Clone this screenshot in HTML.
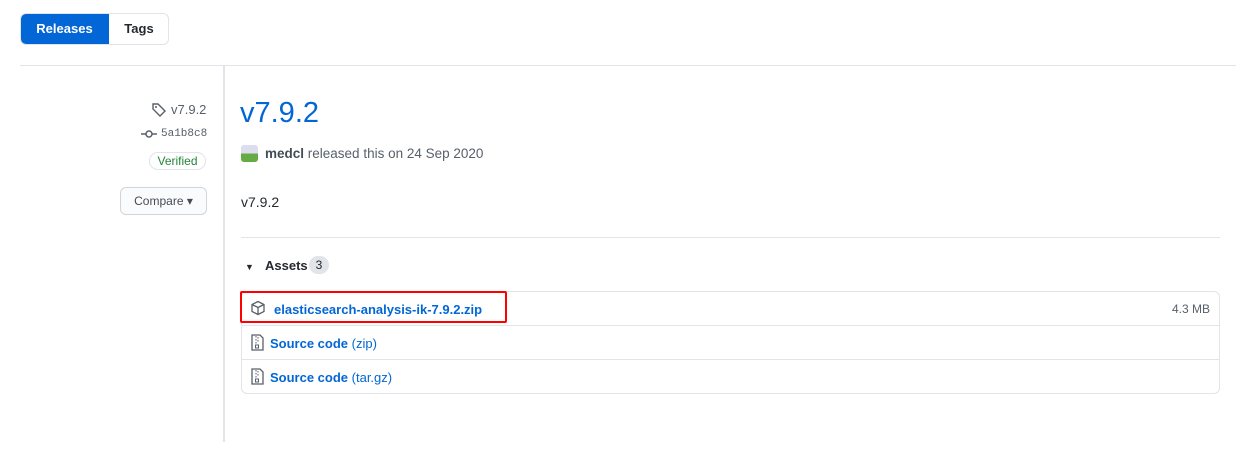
<!DOCTYPE html><html><head><style>
body{margin:0;width:1248px;height:455px;background:#fff;font-family:"Liberation Sans",sans-serif;font-size:13px;color:#24292e;position:relative;overflow:hidden}
.a{position:absolute}
.blue{color:#0366d6}
</style></head><body>
<div class="a" style="left:20px;top:13px;width:149px;height:32px;border:1px solid #e1e4e8;border-radius:6px;box-sizing:border-box;overflow:hidden">
<div class="a" style="left:-1px;top:-1px;width:89px;height:32px;background:#0366d6;color:#fff;font-weight:bold;line-height:32px;text-align:center">Releases</div>
<div class="a" style="left:88px;top:-1px;width:60px;line-height:32px;text-align:center;font-weight:bold">Tags</div>
</div>
<div class="a" style="left:20px;top:65px;width:1216px;height:1px;background:#e1e4e8"></div>
<div class="a" style="left:223px;top:66px;width:2px;height:376px;background:#e1e4e8"></div>
<svg class="a" style="left:151px;top:102px" width="16" height="16" viewBox="0 0 16 16"><path d="M2 2h5l7 7-5 5-7-7z" fill="none" stroke="#586069" stroke-width="1.4"/><circle cx="5" cy="5" r="1" fill="#586069"/></svg>
<div class="a" style="left:171px;top:102px;color:#586069">v7.9.2</div>
<svg class="a" style="left:141px;top:129px" width="16" height="10"><line x1="0" y1="5" x2="16" y2="5" stroke="#586069" stroke-width="1.5"/><circle cx="8" cy="5" r="3" fill="#fff" stroke="#586069" stroke-width="1.5"/></svg>
<div class="a" style="left:161px;top:128px;font-family:'Liberation Mono',monospace;font-size:11px;color:#586069">5a1b8c8</div>
<div class="a" style="left:149px;top:152px;width:57px;height:18px;border:1px solid #e1e4e8;border-radius:10px;box-sizing:border-box;color:#22863a;font-size:12px;line-height:16px;text-align:center">Verified</div>
<div class="a" style="left:120px;top:187px;width:87px;height:28px;border:1px solid #d1d5da;border-radius:6px;box-sizing:border-box;background:#fafbfc;font-size:12px;line-height:26px;text-align:center;color:#444d56">Compare ▾</div>
<div class="a blue" style="left:240px;top:97px;font-size:29px">v7.9.2</div>
<div class="a" style="left:241px;top:145px;width:17px;height:17px;border-radius:3px;background:linear-gradient(#dde 50%,#6a4 50%)"></div>
<div class="a" style="left:265px;top:146px;color:#586069;font-size:13.5px"><b style="color:#444d56">medcl</b> released this on 24 Sep 2020</div>
<div class="a" style="left:241px;top:194px;font-size:14px">v7.9.2</div>
<div class="a" style="left:241px;top:237px;width:979px;height:1px;background:#e1e4e8"></div>
<div class="a" style="left:245px;top:262px;font-size:9px">▼</div>
<div class="a" style="left:265px;top:258px;font-weight:bold;color:#24292e">Assets</div>
<div class="a" style="left:309px;top:256px;width:20px;height:18px;border-radius:9px;background:#e1e4e8;font-size:12px;line-height:18px;text-align:center">3</div>
<div class="a" style="left:241px;top:291px;width:979px;height:103px;border:1px solid #e1e4e8;border-radius:6px;box-sizing:border-box"></div>
<div class="a" style="left:242px;top:325px;width:977px;height:1px;background:#e1e4e8"></div>
<div class="a" style="left:242px;top:359px;width:977px;height:1px;background:#e1e4e8"></div>
<svg class="a" style="left:250px;top:300px" width="16" height="16" viewBox="0 0 16 16"><path d="M8 1.5l6 3v7l-6 3-6-3v-7zM2 4.5l6 3 6-3M8 7.5v7" fill="none" stroke="#586069" stroke-width="1.3"/></svg>
<div class="a blue" style="left:274px;top:302px;font-weight:bold">elasticsearch-analysis-ik-7.9.2.zip</div>
<div class="a" style="left:1172px;top:302px;font-size:12px;color:#586069">4.3 MB</div>
<div class="a" style="left:240px;top:291px;width:267px;height:32px;border:2px solid #f00;border-radius:2px;box-sizing:border-box"></div>
<svg class="a" style="left:251px;top:334px" width="13" height="17" viewBox="0 0 13 17"><path d="M1 1h8l3 3v12H1z" fill="none" stroke="#586069" stroke-width="1.3"/><path d="M5 2v8M7 3v6" stroke="#586069" stroke-dasharray="1.5 1.5"/><rect x="4.5" y="11" width="3" height="3" fill="none" stroke="#586069"/></svg>
<div class="a blue" style="left:270px;top:336px"><b>Source code</b> (zip)</div>
<svg class="a" style="left:251px;top:368px" width="13" height="17" viewBox="0 0 13 17"><path d="M1 1h8l3 3v12H1z" fill="none" stroke="#586069" stroke-width="1.3"/><path d="M5 2v8M7 3v6" stroke="#586069" stroke-dasharray="1.5 1.5"/><rect x="4.5" y="11" width="3" height="3" fill="none" stroke="#586069"/></svg>
<div class="a blue" style="left:270px;top:370px"><b>Source code</b> (tar.gz)</div>
</body></html>
